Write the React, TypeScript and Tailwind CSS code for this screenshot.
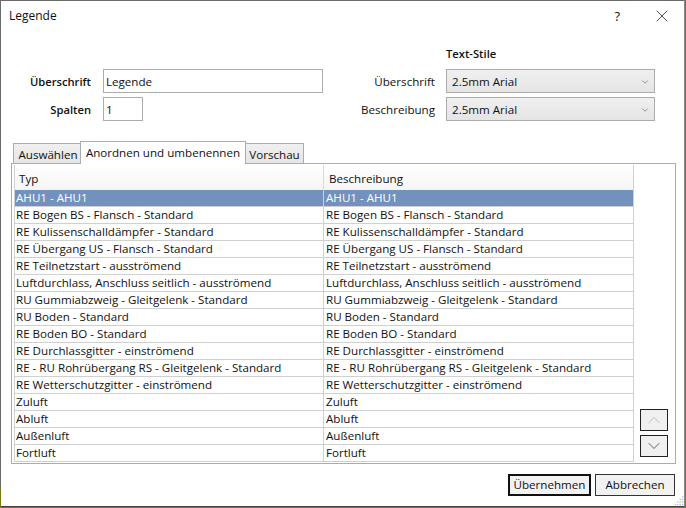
import { ChevronDown, ChevronUp, X } from 'lucide-react'

const rows = [
  'AHU1 - AHU1',
  'RE Bogen BS - Flansch - Standard',
  'RE Kulissenschalldämpfer - Standard',
  'RE Übergang US - Flansch - Standard',
  'RE Teilnetzstart - ausströmend',
  'Luftdurchlass, Anschluss seitlich - ausströmend',
  'RU Gummiabzweig - Gleitgelenk - Standard',
  'RU Boden - Standard',
  'RE Boden BO - Standard',
  'RE Durchlassgitter - einströmend',
  'RE - RU Rohrübergang RS - Gleitgelenk - Standard',
  'RE Wetterschutzgitter - einströmend',
  'Zuluft',
  'Abluft',
  'Außenluft',
  'Fortluft',
]

const Combo = () => (
  <div className="flex h-6 w-[209px] items-center justify-between border border-[#acacac] bg-gradient-to-b from-[#f0f0f0] to-[#e5e5e5] pl-[5px] pr-1 pt-px">
    <span>2.5mm Arial</span>
    <ChevronDown className="h-2.5 w-2.5 text-[#606060]" strokeWidth={1.5} />
  </div>
)

const App = () => {
  return (
    <div className="relative h-[508px] w-[686px] overflow-hidden bg-[#7a7a10] font-['Open_Sans',sans-serif] text-[11.6px] leading-none text-[#111]">
      <div className="relative flex h-[507px] w-[685px] flex-col border-b border-l border-r border-t border-b-[#444] border-l-[#6a6a6a] border-r-[#8a8a8a] border-t-[#6a6a6a] bg-white">
        <div className="flex h-[30px] shrink-0 items-center justify-between pl-2 pr-3">
          <span className="text-[12px]">Legende</span>
          <div className="flex items-center gap-8">
            <span className="text-[13px]">?</span>
            <X className="h-5 w-5" strokeWidth={0.9} />
          </div>
        </div>

        <div className="flex h-[109px] shrink-0 pl-[30px]">
          <div className="grid grid-cols-[60px_auto] content-start items-center gap-x-3 gap-y-1 pt-[38px]">
            <span className="justify-self-end whitespace-nowrap pt-px text-[11.2px] font-semibold">Überschrift</span>
            <div className="flex h-6 w-[220px] items-center border border-[#acacac] pl-[2px] pt-px">Legende</div>
            <span className="justify-self-end pt-[2px] text-[11.2px] font-semibold">Spalten</span>
            <div className="flex h-6 w-10 items-center border border-[#acacac] pl-[2px] pt-px">1</div>
          </div>
          <div className="ml-[40px] grid grid-cols-[72px_auto] content-start items-center gap-x-[11px] gap-y-1 pt-[17px]">
            <span />
            <span className="mb-[6px] text-[11.2px] font-semibold">Text-Stile</span>
            <span className="justify-self-end whitespace-nowrap pt-px">Überschrift</span>
            <Combo />
            <span className="justify-self-end whitespace-nowrap pt-px">Beschreibung</span>
            <Combo />
          </div>
        </div>

        <div className="flex h-[23px] shrink-0 items-end pl-3">
          <div className="flex h-[20px] w-[68px] items-center justify-center border border-b-0 border-[#acacac] bg-gradient-to-b from-[#f0f0f0] to-[#e5e5e5] pl-[2px] pt-[2px]">Auswählen</div>
          <div className="z-10 -mb-px -ml-px flex h-[23px] w-[166px] items-start justify-center border border-b-0 border-[#acacac] bg-white pt-[5px]">Anordnen und umbenennen</div>
          <div className="flex h-[20px] w-[58px] items-center justify-center border border-b-0 border-l-0 border-[#acacac] bg-gradient-to-b from-[#f0f0f0] to-[#e5e5e5] pt-[2px]">Vorschau</div>
        </div>

        <div className="ml-[10px] flex h-[301px] w-[665px] shrink-0 border border-[#acacac] py-[1px] pl-[2px]">
          <div className="flex w-[620px] flex-col border-b border-l border-r border-[#d0d0d0]">
            <div className="flex h-[25px] shrink-0 bg-gradient-to-b from-white to-[#f5f5f5]">
              <div className="flex w-[309px] items-center border-r border-[#d9d9d9] pl-1 pt-[2px]">Typ</div>
              <div className="flex flex-1 items-center pl-[5px] pt-[2px]">Beschreibung</div>
            </div>
            {rows.map((row, i) => (
              <div
                key={row}
                className={`flex h-[17px] shrink-0 items-center whitespace-nowrap border-b border-[#d0d0d0] ${i === 0 ? 'bg-[#7391bd] text-white' : ''}`}
              >
                <div className="flex h-full w-[309px] items-center border-r border-[#d0d0d0] pl-[1px]">{row}</div>
                <div className="flex h-full flex-1 items-center pl-[2px]">{row}</div>
              </div>
            ))}
          </div>
          <div className="flex flex-1 flex-col items-start justify-end gap-1 pb-[5px] pl-[6px]">
            <div className="flex h-[22px] w-7 items-center justify-center border border-[#222] bg-[#f0f0f0]">
              <ChevronUp className="h-5 w-5 text-[#b5b5b5]" strokeWidth={1} />
            </div>
            <div className="flex h-[22px] w-7 items-center justify-center border border-[#222] bg-[#f0f0f0]">
              <ChevronDown className="h-5 w-5 text-[#444]" strokeWidth={1} />
            </div>
          </div>
        </div>

        <div className="mt-[10px] flex justify-end gap-1 pr-[9px]">
          <div className="flex h-[22px] w-[83px] items-center justify-center border-2 border-[#111] bg-[#f2f2f2]">Übernehmen</div>
          <div className="flex h-[22px] w-20 items-center justify-center border border-[#333] bg-[#f2f2f2]">Abbrechen</div>
        </div>

        <svg className="absolute bottom-0 right-0 h-[10px] w-[10px] text-[#b8c4d0]" viewBox="0 0 10 10" fill="currentColor">
          <rect x="8" y="0" width="1.4" height="1.4" />
          <rect x="5.5" y="2.6" width="1.4" height="1.4" />
          <rect x="8" y="2.6" width="1.4" height="1.4" />
          <rect x="3" y="5.2" width="1.4" height="1.4" />
          <rect x="5.5" y="5.2" width="1.4" height="1.4" />
          <rect x="8" y="5.2" width="1.4" height="1.4" />
          <rect x="0.5" y="7.8" width="1.4" height="1.4" />
          <rect x="3" y="7.8" width="1.4" height="1.4" />
          <rect x="5.5" y="7.8" width="1.4" height="1.4" />
          <rect x="8" y="7.8" width="1.4" height="1.4" />
        </svg>
      </div>
      <div className="absolute bottom-0 left-0 h-5 w-px bg-[#7a7a10]" />
    </div>
  )
}

export default App
